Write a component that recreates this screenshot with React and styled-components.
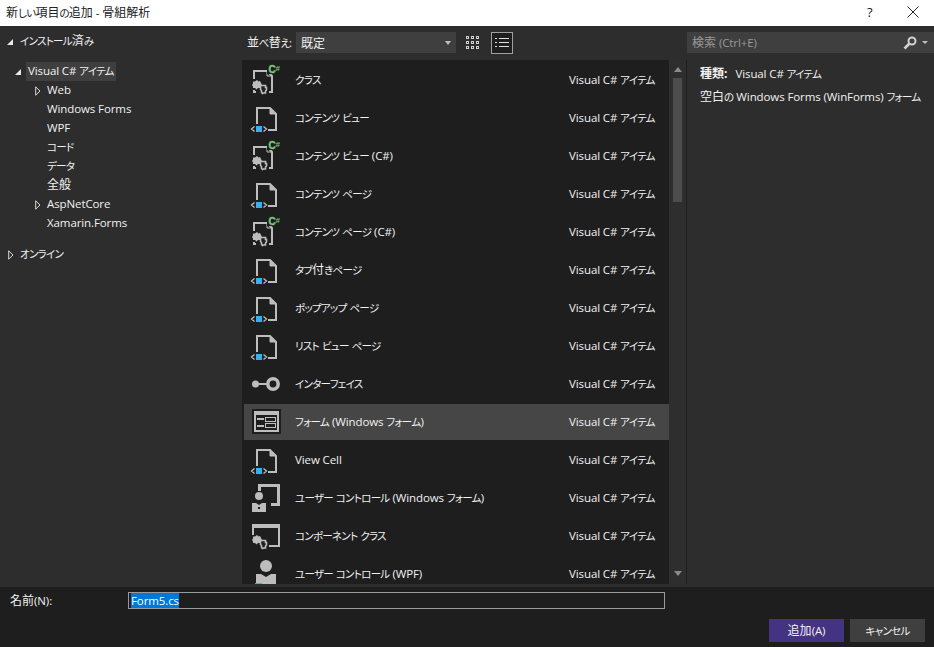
import React from "react";
import styled, { createGlobalStyle } from "styled-components";

const GlobalStyle = createGlobalStyle`
  html, body {
    margin: 0;
    padding: 0;
    background: #2d2d2d;
  }
  * {
    box-sizing: border-box;
  }
`;

const C = "#bdbdbd";

const Kana = styled.span`
  font-size: 10.5px;
  letter-spacing: -0.7px;
`;

const Latin = styled.span`
  font-size: 11.5px;
  letter-spacing: -0.1px;
`;

// kana and latin runs sit narrower in the reference than kanji
const Tx = ({ children }) =>
  children.split(/([\u3040-\u30ff]+|[\u4e00-\u9fff]+)/).map((run, i) => {
    if (!run) return null;
    if (/[\u3040-\u30ff]/.test(run)) return <Kana key={i}>{run}</Kana>;
    if (/[\u4e00-\u9fff]/.test(run)) return <span key={i}>{run}</span>;
    return <Latin key={i}>{run}</Latin>;
  });

const PageIcon = () => (
  <svg width="32" height="32" viewBox="0 0 32 32" fill="none">
    <path d="M7 22V6H20L26 12V28H18" stroke={C} strokeWidth="2" />
    <path d="M20 6V12H26" fill={C} stroke={C} strokeWidth="1" />
    <rect x="6" y="24" width="6" height="6" fill="#34b1f5" />
    <path d="M4.500 24.500L1.500 27L4.500 29.500M13.500 24.500L16.500 27L13.500 29.500" stroke={C} strokeWidth="1.300" />
  </svg>
);

const Gears = ({ x = 0, y = 0 }) => (
  <g transform={`translate(${x} ${y})`}>
    <path d="M5 0L6.500 1.500L8 1L9 3L10 5L8.500 6.500L8.500 8L6 8L4.500 9.500L3 8L1 8L1 6.500L0 5L1 3.500L1 1.500L3 1.500Z" fill={C} />
    <path d="M8.500 5.500H13.500V7.500H14.500V10L13.500 11V13H11.500L10.500 13.500L9.500 12.500V10.500L8.500 9.500V7.500Z" fill="#1e1e1e" stroke={C} strokeWidth="1.600" />
  </g>
);

const ClassIcon = () => (
  <svg width="32" height="32" viewBox="0 0 32 32" fill="none">
    <path d="M4 15V7H17L22 12V28H19M4 26V28H6" stroke={C} strokeWidth="2" />
    <path d="M17 6.500V12H22" stroke={C} />
    <Gears x={2} y={16} />
    <rect x="17" y="0" width="14" height="10" fill="#1e1e1e" />
    <CsText x="18.500" y="9">C</CsText>
    <CsMark x="25.500" y="6.500">#</CsMark>
  </svg>
);

const InterfaceIcon = () => (
  <svg width="32" height="32" viewBox="0 0 32 32" fill="none">
    <circle cx="5.500" cy="16" r="3.500" fill={C} />
    <path d="M8 16H17" stroke={C} strokeWidth="2" />
    <circle cx="23" cy="16" r="5.200" stroke={C} strokeWidth="3.500" />
  </svg>
);

const FormIcon = () => (
  <svg width="32" height="32" viewBox="0 0 32 32" fill="none">
    <rect x="2" y="3" width="29" height="25" fill="#1e1e1e" />
    <rect x="4" y="5" width="25" height="21" fill={C} />
    <rect x="6" y="9" width="21" height="15" fill="#1e1e1e" />
    <path d="M7 13H14M7 20H14" stroke={C} strokeWidth="2" />
    <rect x="15.500" y="11.500" width="10" height="4" stroke={C} />
    <rect x="15.500" y="17.500" width="10" height="4" stroke={C} />
  </svg>
);

const UserControlIcon = () => (
  <svg width="32" height="32" viewBox="0 0 32 32" fill="none">
    <path d="M9.500 9V3.500H28.500V22.500H21" stroke={C} strokeWidth="3" />
    <circle cx="9" cy="14" r="4" fill={C} />
    <path d="M2 21H6L9 23L12 21H16V30H2Z" fill={C} />
    <rect x="8" y="25" width="2" height="2" fill="#1e1e1e" />
  </svg>
);

const ComponentIcon = () => (
  <svg width="32" height="32" viewBox="0 0 32 32" fill="none">
    <path d="M3 15V5H29V26H19" stroke={C} strokeWidth="2" />
    <rect x="2" y="4" width="28" height="4" fill={C} />
    <Gears x={2} y={15} />
  </svg>
);

const WpfControlIcon = () => (
  <svg width="32" height="32" viewBox="0 0 32 32" fill="none">
    <circle cx="16" cy="8" r="6" fill={C} />
    <path d="M6 16H11L16 19L21 16H26V26H6Z" fill={C} />
    <path d="M5 25.500H12" stroke="#34b1f5" />
  </svg>
);

const ICONS = {
  page: PageIcon,
  cls: ClassIcon,
  iface: InterfaceIcon,
  form: FormIcon,
  user: UserControlIcon,
  comp: ComponentIcon,
  wpf: WpfControlIcon,
};

const items = [
  { name: "クラス", icon: "cls" },
  { name: "コンテンツ ビュー", icon: "page" },
  { name: "コンテンツ ビュー (C#)", icon: "cls" },
  { name: "コンテンツ ページ", icon: "page" },
  { name: "コンテンツ ページ (C#)", icon: "cls" },
  { name: "タブ付きページ", icon: "page" },
  { name: "ポップアップ ページ", icon: "page" },
  { name: "リスト ビュー ページ", icon: "page" },
  { name: "インターフェイス", icon: "iface" },
  { name: "フォーム (Windows フォーム)", icon: "form", selected: true },
  { name: "View Cell", icon: "page" },
  { name: "ユーザー コントロール (Windows フォーム)", icon: "user" },
  { name: "コンポーネント クラス", icon: "comp" },
  { name: "ユーザー コントロール (WPF)", icon: "wpf" },
];

const TreeArrow = ({ open }) =>
  open ? (
    <svg width="8" height="8" viewBox="0 0 8 8">
      <path d="M7 1V7H1Z" fill="#e8e8e8" />
    </svg>
  ) : (
    <svg width="6" height="10" viewBox="0 0 6 10" fill="none">
      <path d="M0.700 0.800L5 5L0.700 9.200Z" stroke="#d8d8d8" />
    </svg>
  );

export default function App() {
  return (
    <Dialog>
      <GlobalStyle />
      <TitleBar>
        <TitleText><Tx>新しい項目の追加 - 骨組解析</Tx></TitleText>
        <HelpMark>?</HelpMark>
        <CloseIcon width="12" height="12" viewBox="0 0 12 12" fill="none">
          <path d="M0.500 0.500L11.500 11.500M11.500 0.500L0.500 11.500" stroke="#222" />
        </CloseIcon>
      </TitleBar>

      <Body>
        <Tree>
          <TreeRow $indent={6} $arrow={14}>
            <TreeArrow open />
            <TreeLabel><Tx>インストール済み</Tx></TreeLabel>
          </TreeRow>
          <TreeRow $indent={14} $arrow={12} $gap={11}>
            <TreeArrow open />
            <TreeLabel $selected><Tx>Visual C# アイテム</Tx></TreeLabel>
          </TreeRow>
          <TreeRow $indent={34} $arrow={13}>
            <TreeArrow />
            <TreeLabel><Tx>Web</Tx></TreeLabel>
          </TreeRow>
          <TreeRow $indent={47}><TreeLabel><Tx>Windows Forms</Tx></TreeLabel></TreeRow>
          <TreeRow $indent={47}><TreeLabel><Tx>WPF</Tx></TreeLabel></TreeRow>
          <TreeRow $indent={47}><TreeLabel><Tx>コード</Tx></TreeLabel></TreeRow>
          <TreeRow $indent={47}><TreeLabel><Tx>データ</Tx></TreeLabel></TreeRow>
          <TreeRow $indent={47}><TreeLabel><Tx>全般</Tx></TreeLabel></TreeRow>
          <TreeRow $indent={34} $arrow={13}>
            <TreeArrow />
            <TreeLabel><Tx>AspNetCore</Tx></TreeLabel>
          </TreeRow>
          <TreeRow $indent={47}><TreeLabel><Tx>Xamarin.Forms</Tx></TreeLabel></TreeRow>
          <TreeRow $indent={7} $arrow={13} $gap={12}>
            <TreeArrow />
            <TreeLabel><Tx>オンライン</Tx></TreeLabel>
          </TreeRow>
        </Tree>

        <Center>
          <Toolbar>
            <SortLabel><Tx>並べ替え:</Tx></SortLabel>
            <SortSelect>
              既定
              <Caret />
            </SortSelect>
            <ViewButton>
              <svg width="16" height="16" viewBox="0 0 16 16" fill="#d0d0d0">
                {[0, 5, 10].flatMap((x) =>
                  [1, 6, 11].map((y) => (
                    <path key={`${x}-${y}`} d={`M${x} ${y}h3v3h-3zM${x + 1} ${y + 1}h1v1h-1z`} fillRule="evenodd" />
                  ))
                )}
              </svg>
            </ViewButton>
            <ViewButton $active>
              <svg width="14" height="12" viewBox="0 0 14 12" fill="#e0e0e0">
                <path d="M0 1h2v1h-2zM4 1h10v1h-10zM0 5h2v1h-2zM4 5h10v1h-10zM0 9h2v1h-2zM4 9h10v1h-10z" />
              </svg>
            </ViewButton>
          </Toolbar>
          <ListArea>
            <List>
              {items.map((item) => {
                const Icon = ICONS[item.icon];
                return (
                  <Row key={item.name} $selected={item.selected}>
                    <RowIcon><Icon /></RowIcon>
                    <RowName><Tx>{item.name}</Tx></RowName>
                    <RowType><Tx>Visual C# アイテム</Tx></RowType>
                  </Row>
                );
              })}
            </List>
            <ScrollBar>
              <ScrollArrow />
              <Thumb />
              <ScrollSpacer />
              <ScrollArrow $down />
            </ScrollBar>
          </ListArea>
        </Center>

        <Side>
          <SearchBox>
            <SearchHint><Tx>検索 (Ctrl+E)</Tx></SearchHint>
            <svg width="14" height="14" viewBox="0 0 14 14" fill="none">
              <circle cx="9" cy="5" r="3.500" stroke="#d0d0d0" strokeWidth="2" />
              <path d="M6.500 7.500L1.500 12.500" stroke="#d0d0d0" strokeWidth="2.600" />
            </svg>
            <SearchCaret />
          </SearchBox>
          <Details>
            <KindLine><b>種類:</b><span><Tx>Visual C# アイテム</Tx></span></KindLine>
            <DescLine><Tx>空白の Windows Forms (WinForms) フォーム</Tx></DescLine>
          </Details>
        </Side>
      </Body>

      <Footer>
        <NameRow>
          <NameLabel><Tx>名前(N):</Tx></NameLabel>
          <NameInput><Selected>Form5.cs</Selected></NameInput>
        </NameRow>
        <Buttons>
          <Button $primary><Tx>追加(A)</Tx></Button>
          <Button><Tx>キャンセル</Tx></Button>
        </Buttons>
      </Footer>
    </Dialog>
  );
}

const CsText = styled.text`
  fill: #78c87a;
  stroke: #78c87a;
  stroke-width: 0.4px;
  font-family: "Liberation Sans", sans-serif;
  font-size: 10px;
  font-weight: 700;
`;

const CsMark = styled.text`
  fill: #78c87a;
  font-family: "Liberation Sans", sans-serif;
  font-size: 8px;
  font-weight: 700;
`;

const Dialog = styled.div`
  width: 934px;
  height: 647px;
  display: flex;
  flex-direction: column;
  overflow: hidden;
  background: #2d2d2d;
  color: #f1f1f1;
  font-family: "Open Sans", "Noto Sans CJK JP", sans-serif;
  font-size: 12px;
  font-feature-settings: "palt";
`;

const TitleBar = styled.div`
  height: 26px;
  flex: none;
  display: flex;
  align-items: center;
  padding: 0 0 2px 6px;
  background: #fff;
  color: #222;
`;

const TitleText = styled.div`
  flex: 1;
`;

const HelpMark = styled.div`
  width: 10px;
  margin-right: 30px;
  font-size: 13px;
`;

const CloseIcon = styled.svg`
  margin-right: 15px;
`;

const Body = styled.div`
  flex: 1;
  display: flex;
  min-height: 0;
`;

const Tree = styled.div`
  width: 242px;
  flex: none;
  padding-top: 6px;
`;

const TreeRow = styled.div`
  height: 19px;
  display: flex;
  align-items: center;
  padding-left: ${(p) => p.$indent}px;
  margin-top: ${(p) => p.$gap || 0}px;

  & > svg {
    flex: none;
    width: ${(p) => p.$arrow}px;
    padding-right: ${(p) => p.$arrow - 8}px;
  }
`;

const TreeLabel = styled.div`
  height: 19px;
  line-height: 18px;
  padding: 0 2px;
  margin-left: ${(p) => (p.$selected ? 0 : -2)}px;
  background: ${(p) => (p.$selected ? "#3f3f3f" : "transparent")};
  white-space: nowrap;
`;

const Center = styled.div`
  width: 445px;
  flex: none;
  display: flex;
  flex-direction: column;
`;

const Toolbar = styled.div`
  height: 34px;
  flex: none;
  display: flex;
  align-items: flex-start;
  padding: 6px 0 0 5px;
`;

const SortLabel = styled.div`
  width: 49px;
  line-height: 22px;
  letter-spacing: -0.4px;
  white-space: nowrap;
`;

const SortSelect = styled.div`
  width: 160px;
  height: 21px;
  display: flex;
  align-items: center;
  justify-content: space-between;
  padding: 0 5px;
  background: #3f3f3f;
`;

const Caret = styled.div`
  width: 0;
  height: 0;
  border-left: 3.500px solid transparent;
  border-right: 3.500px solid transparent;
  border-top: 4px solid #c0c0c0;
`;

const ViewButton = styled.div`
  width: 22px;
  height: 22px;
  margin-left: ${(p) => (p.$active ? 6 : 7)}px;
  display: flex;
  align-items: center;
  justify-content: center;
  border: 1px solid ${(p) => (p.$active ? "#a0a0a0" : "transparent")};
  background: ${(p) => (p.$active ? "#1e1e1e" : "transparent")};
`;

const ListArea = styled.div`
  display: flex;
  height: 524px;
`;

const List = styled.div`
  flex: 1;
  min-width: 0;
  overflow: hidden;
  padding: 2px 0 0 2px;
  background: #1e1e1e;
`;

const Row = styled.div`
  height: 36px;
  margin-bottom: 2px;
  display: flex;
  align-items: center;
  padding-left: 6px;
  background: ${(p) => (p.$selected ? "#464646" : "transparent")};
`;

const RowIcon = styled.div`
  width: 32px;
  height: 32px;
  flex: none;
`;

const RowName = styled.div`
  width: 274px;
  margin-left: 13px;
  padding-bottom: 2px;
  white-space: nowrap;
`;

const RowType = styled.div`
  padding-bottom: 2px;
  white-space: nowrap;
`;

const ScrollBar = styled.div`
  width: 18px;
  flex: none;
  display: flex;
  flex-direction: column;
  align-items: center;
  background: #2e2e2e;
  border-right: 1px solid #1e1e1e;
  padding: 7px 0 8px;
`;

const ScrollArrow = styled.div`
  width: 0;
  height: 0;
  border-left: 4.500px solid transparent;
  border-right: 4.500px solid transparent;
  ${(p) =>
    p.$down
      ? "border-top: 5px solid #8a8a8a;"
      : "border-bottom: 5px solid #8a8a8a;"}
`;

const Thumb = styled.div`
  width: 9px;
  height: 124px;
  margin-top: 6px;
  background: #4d4d4d;
`;

const ScrollSpacer = styled.div`
  flex: 1;
`;

const Side = styled.div`
  flex: 1;
  display: flex;
  flex-direction: column;
`;

const SearchBox = styled.div`
  height: 21px;
  margin-top: 6px;
  display: flex;
  align-items: center;
  padding: 0 6px 0 5px;
  background: #3f3f3f;
`;

const SearchHint = styled.div`
  flex: 1;
  padding-bottom: 2px;
  color: #999;
`;

const SearchCaret = styled.div`
  width: 0;
  height: 0;
  margin-left: 5px;
  border-left: 3px solid transparent;
  border-right: 3px solid transparent;
  border-top: 3px solid #c0c0c0;
`;

const Details = styled.div`
  padding: 9px 0 0 13px;
`;

const KindLine = styled.div`
  height: 23px;
  line-height: 23px;
  display: flex;
  gap: 8px;
  white-space: nowrap;
`;

const DescLine = styled.div`
  height: 23px;
  line-height: 23px;
  white-space: nowrap;
`;

const Footer = styled.div`
  height: 60px;
  flex: none;
  background: #1e1e1e;
  display: flex;
  flex-direction: column;
`;

const NameRow = styled.div`
  display: flex;
  align-items: center;
  padding: 4px 0 0 10px;
`;

const NameLabel = styled.div`
  width: 118px;
`;

const NameInput = styled.div`
  width: 537px;
  height: 17px;
  border: 1px solid #999;
  padding-left: 2px;
  display: flex;
  background: #1e1e1e;
`;

const Selected = styled.span`
  background: #0078d7;
  color: #fff;
  line-height: 15px;
  font-size: 11.5px;
  letter-spacing: -0.1px;
`;

const Buttons = styled.div`
  display: flex;
  justify-content: flex-end;
  gap: 6px;
  padding: 10px 9px 0 0;
`;

const Button = styled.div`
  width: 75px;
  height: 23px;
  line-height: 23px;
  text-align: center;
  background: ${(p) => (p.$primary ? "#433382" : "#3f3f3f")};
`;
